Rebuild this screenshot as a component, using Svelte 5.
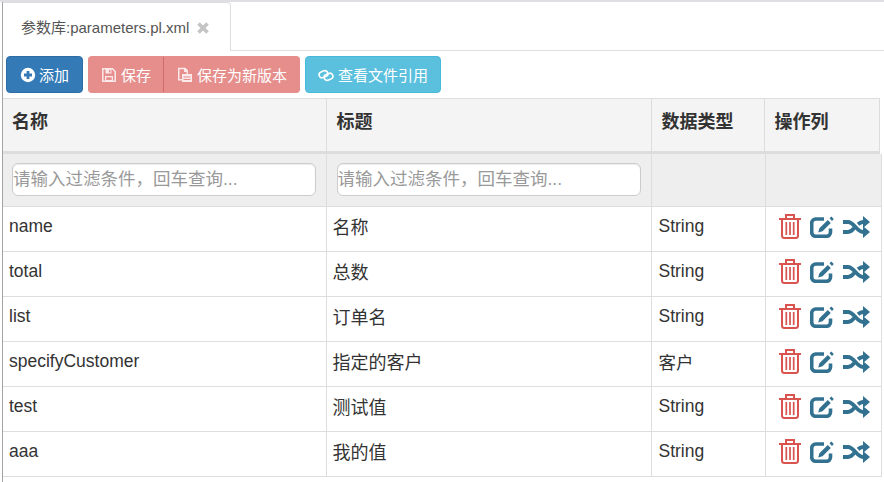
<script>
  const rows = [
    { name: "name", title: "名称", type: "String" },
    { name: "total", title: "总数", type: "String" },
    { name: "list", title: "订单名", type: "String" },
    { name: "specifyCustomer", title: "指定的客户", type: "客户" },
    { name: "test", title: "测试值", type: "String" },
    { name: "aaa", title: "我的值", type: "String" },
  ];
</script>

<main>
  <div class="tabs">
    <div class="tab">
      <span>参数库:parameters.pl.xml</span>
      <svg class="close" viewBox="0 0 14 14" width="14" height="14">
        <path d="M2.500 2.500l9 9M11.500 2.500l-9 9" stroke="#c4c4c4" stroke-width="3.600" fill="none" />
      </svg>
    </div>
  </div>

  <div class="toolbar">
    <button class="btn primary">
      <svg viewBox="0 0 16 16" width="16" height="16">
        <path fill="#fff" fill-rule="evenodd" d="M8 .8a7.200 7.200 0 1 0 0 14.400A7.200 7.200 0 0 0 8 .8zM6.600 4h2.800v2.600H12v2.800H9.400V12H6.600V9.400H4V6.600h2.600z" />
      </svg>
      添加
    </button>
    <div class="group">
      <button class="btn danger">
        <svg viewBox="0 0 16 16" width="16" height="16">
          <path fill="none" stroke="#fbe9e9" stroke-width="1.500" d="M1.800 1.800h9.700l2.700 2.700v9.700H1.800z" />
          <path fill="#fbe9e9" d="M4.500 2h6v4.500h-6zM4 9h8v5H4z" />
          <path fill="#e58e8c" d="M5.300 10.200h5.400v2.800H5.300zM8 3h1.500v2.500H8z" />
        </svg>
        保存
      </button>
      <button class="btn danger">
        <svg viewBox="0 0 16 16" width="16" height="16">
          <path fill="#fbe9e9" fill-rule="evenodd" d="M1 .8h7.500L11 3.300V7h4v8H5v-1.500H1zM2.500 2.300v9.700H5V7h4.500V5H7V2.300zM6.500 9.500h7v1h-7zm0 2.500h7v1h-7z" />
        </svg>
        保存为新版本
      </button>
    </div>
    <button class="btn info">
      <svg viewBox="0 0 16 16" width="16" height="16">
        <g fill="none" stroke="#fff" stroke-width="1.600">
          <rect x="1" y="4.200" width="9" height="6" rx="3" transform="rotate(-20 5.500 7.200)" />
          <rect x="6" y="6.800" width="9" height="6" rx="3" transform="rotate(-20 10.500 9.800)" />
        </g>
      </svg>
      查看文件引用
    </button>
  </div>

  <table class="head">
    <colgroup>
      <col style="width: 323px" /><col style="width: 325px" /><col style="width: 113px" /><col />
    </colgroup>
    <thead>
      <tr>
        <th>名称</th>
        <th>标题</th>
        <th>数据类型</th>
        <th>操作列</th>
      </tr>
    </thead>
  </table>

  <table class="body">
    <colgroup>
      <col style="width: 323px" /><col style="width: 325px" /><col style="width: 114px" /><col />
    </colgroup>
    <tbody>
      <tr class="filter">
        <td><input placeholder="请输入过滤条件，回车查询..." /></td>
        <td><input placeholder="请输入过滤条件，回车查询..." /></td>
        <td></td>
        <td></td>
      </tr>
      {#each rows as row}
        <tr>
          <td>{row.name}</td>
          <td class="title">{row.title}</td>
          <td>{row.type}</td>
          <td class="ops">
            <div class="icons">
              <svg class="trash" viewBox="0 0 22 26" width="22" height="26">
                <g fill="none" stroke="#d9534f" stroke-width="2">
                  <path d="M0 6h22" />
                  <path d="M7 5.500V2h8v3.500" />
                  <path d="M3 6v16.500a2.500 2.500 0 0 0 2.500 2.500h11a2.500 2.500 0 0 0 2.500-2.500V6" />
                  <path d="M7.300 9v13M11 9v13M14.700 9v13" stroke-width="1.700" />
                </g>
              </svg>
              <svg viewBox="0 0 24 23" width="24" height="23">
                <path fill="none" stroke="#337191" stroke-width="3.600" d="M20.500 13.500v3.800a4 4 0 0 1-4 4H5.700a4 4 0 0 1-4-4V8a4 4 0 0 1 4-4H14" />
                <path fill="#337191" d="M17.800 5l3 3-8.300 8.300-4.300 1.200 1.200-4.300zM19.500 3.300l1.800-1.800 2.500 2.500-1.800 2z" />
              </svg>
              <svg viewBox="0 0 27 22" width="27" height="22">
                <path fill="none" stroke="#337191" stroke-width="3.800" d="M0 6h5c6 0 9 10 15 10h2M0 16h5c2.500 0 4.500-1.700 6-3.800M15 8.300C16.500 7 18 6 20 6h2" />
                <path fill="#337191" d="M20 0l7 6-7 6zM20 10l7 6-7 6z" />
              </svg>
            </div>
          </td>
        </tr>
      {/each}
    </tbody>
  </table>
</main>

<style>
  :global(body) {
    margin: 0;
    background: #fff;
    color: #333;
    font-family: "Liberation Sans", "Noto Sans CJK SC", sans-serif;
    font-size: 17.5px;
  }
  main {
    box-sizing: border-box;
    width: 884px;
    height: 482px;
    overflow: hidden;
    border-top: 2px solid #dfdfe3;
    padding-left: 2px;
    background: linear-gradient(#a3a3a3, #a3a3a3) 2px 0 / 1px 100% no-repeat #fff;
  }
  .tabs {
    margin-left: 1px;
    height: 48px;
    border-bottom: 1px solid #ddd;
    display: flex;
    align-items: flex-end;
  }
  .tab {
    box-sizing: border-box;
    width: 228px;
    height: 49px;
    margin-bottom: -1px;
    padding: 0 0 2px 18px;
    display: flex;
    align-items: center;
    gap: 7px;
    font-size: 15px;
    color: #555;
    background: #fff;
    border-right: 1px solid #ddd;
    border-top: 1px solid #ddd;
    border-radius: 0 4px 0 0;
  }
  .close {
    margin-top: 3px;
  }
  .toolbar {
    display: flex;
    gap: 5px;
    margin: 5px 0 5px 4px;
    height: 37px;
  }
  .group {
    display: flex;
  }
  .btn {
    box-sizing: border-box;
    height: 37px;
    display: flex;
    align-items: center;
    gap: 3px;
    padding: 0 0 0 13px;
    border: 1px solid;
    border-radius: 4px;
    color: #fff;
    font-family: inherit;
    font-size: 15px;
    white-space: nowrap;
  }
  .primary {
    width: 77px;
    background: #337ab7;
    border-color: #2e6da4;
  }
  .danger {
    background: #e58e8c;
    border-color: #e58e8c;
  }
  .group .btn:first-child {
    width: 76px;
    padding-left: 12px;
    gap: 4px;
    border-radius: 4px 0 0 4px;
    border-right-color: #d46a68;
  }
  .group .btn:last-child {
    width: 136px;
    padding-left: 13px;
    gap: 4px;
    border-radius: 0 4px 4px 0;
    border-left: 0;
  }
  .info {
    width: 136px;
    background: #5bc0de;
    border-color: #46b8da;
    padding-left: 12px;
    gap: 4px;
  }
  table {
    border-collapse: collapse;
    table-layout: fixed;
    margin-left: 1px;
  }
  .head {
    width: 877px;
  }
  .head th {
    box-sizing: border-box;
    height: 54px;
    padding: 0 8px 11px 10px;
    text-align: left;
    font-weight: 700;
    background: #f4f4f4;
    border: 1px solid #ddd;
    border-bottom: 3px solid #ddd;
    border-left-color: #e4e4e4;
    font-size: 18px;
  }
  .head th:first-child {
    border-left: 0;
    padding-left: 9px;
  }
  .head th:last-child {
    border-radius: 0 4px 0 0;
  }
  .body {
    width: 879px;
  }
  .body td {
    box-sizing: border-box;
    height: 45px;
    padding: 0 6px 4px;
    border: 1px solid #ddd;
    font-size: 17.5px;
  }
  .body td.title {
    padding-bottom: 6px;
    font-size: 18px;
  }
  .body td:first-child {
    border-left: 0;
  }
  .body td:nth-child(3) {
    padding-left: 7px;
  }
  .body tr:first-child td {
    border-top: 0;
  }
  .filter td {
    height: 52px;
    padding: 0 10px 0 10px;
    background: #eee;
  }
  .filter td:first-child {
    padding-left: 9px;
  }
  input {
    box-sizing: border-box;
    display: block;
    width: 304px;
    height: 33px;
    padding: 0;
    border: 1px solid #ccc;
    border-radius: 6px;
    background: #fff;
    font-family: inherit;
    font-size: 17.5px;
    box-shadow: inset 0 1px 1px rgba(0, 0, 0, 0.075);
    outline: none;
  }
  input::placeholder {
    color: #999;
    opacity: 1;
  }
  td.ops {
    padding: 0 0 4px 13px;
  }
  .icons {
    display: flex;
    align-items: center;
    gap: 9px;
  }
  .trash {
    margin-top: -2px;
  }
</style>
